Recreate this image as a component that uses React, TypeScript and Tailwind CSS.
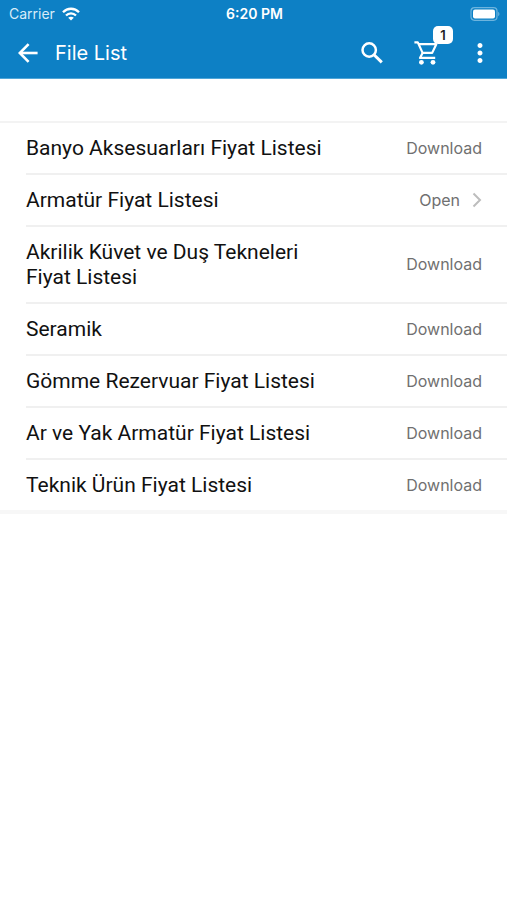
import { MdMoreVert } from 'react-icons/md';

type PriceFile = {
    name: string;
    downloaded?: boolean;
};

const files: PriceFile[] = [
    { name: 'Banyo Aksesuarları Fiyat Listesi' },
    { name: 'Armatür Fiyat Listesi', downloaded: true },
    { name: 'Akrilik Küvet ve Duş Tekneleri Fiyat Listesi' },
    { name: 'Seramik' },
    { name: 'Gömme Rezervuar Fiyat Listesi' },
    { name: 'Ar ve Yak Armatür Fiyat Listesi' },
    { name: 'Teknik Ürün Fiyat Listesi' },
];

export default function App() {
    return (
        <div className="min-h-screen bg-white font-['Inter','Liberation_Sans',sans-serif] text-[#111111]">
            <header className="border-b border-[#4fa6d8] bg-[#0d80c5] text-white">
                <StatusBar />
                <Toolbar />
            </header>

            <main className="pt-[42px]">
                <ul className="border-t-2 border-b-4 border-t-[#f3f3f3] border-b-[#f7f7f7]">
                    {files.map((file) => (
                        <FileRow key={file.name} file={file} />
                    ))}
                </ul>
            </main>
        </div>
    );
}

function StatusBar() {
    return (
        <div className="grid h-[27px] grid-cols-3 items-center pr-[7px] pl-[9px] text-[14px] leading-4">
            <div className="flex items-center gap-[7px]">
                <span className="text-[#d8ecf8]">Carrier</span>
                <WifiIcon />
            </div>
            <span className="text-center font-semibold">6:20 PM</span>
            <div className="flex justify-end">
                <BatteryIcon />
            </div>
        </div>
    );
}

function Toolbar() {
    return (
        <div className="flex h-[51px] items-center pr-[15px] pl-4">
            <button type="button" aria-label="Back" className="flex size-6 items-center justify-center">
                <BackIcon />
            </button>
            <h1 className="ml-[15px] flex-1 text-[20px] leading-6">File List</h1>
            <div className="flex items-center gap-[30px]">
                <button type="button" aria-label="Search" className="flex size-6 items-center justify-center">
                    <SearchIcon />
                </button>
                <button type="button" aria-label="Cart" className="relative size-6">
                    <CartIcon />
                    <span className="absolute -top-[15px] -right-[15px] flex h-[18px] w-5 items-center justify-center rounded-[5px] bg-white text-[13px] leading-4 font-semibold text-[#222222]">
                        1
                    </span>
                </button>
                <button type="button" aria-label="More options" className="flex size-6 items-center justify-center">
                    <MdMoreVert className="size-[30px] shrink-0" />
                </button>
            </div>
        </div>
    );
}

function FileRow({ file }: { file: PriceFile }) {
    return (
        <li className="group pl-[26px]">
            <div className="flex items-center justify-between border-b-2 border-[#f0f0f0] pt-[13px] pr-[25px] pb-3 group-last:border-b-0">
                <span className="max-w-[300px] font-['Roboto','Liberation_Sans',sans-serif] text-[21px] leading-[25px]">
                    {file.name}
                </span>
                <button type="button" className="flex items-center gap-3 pb-0.5 text-[16px] leading-5 text-[#707070]">
                    {file.downloaded ? 'Open' : 'Download'}
                    {file.downloaded && <ChevronIcon />}
                </button>
            </div>
        </li>
    );
}

function BackIcon() {
    return (
        <svg width="20" height="20" viewBox="0 0 20 20" fill="none" stroke="currentColor" strokeWidth="2.6" aria-hidden="true">
            <path d="M19.6 10H2.5" />
            <path d="M10.6 1.2L1.8 10L10.6 18.8" />
        </svg>
    );
}

function SearchIcon() {
    return (
        <svg width="22" height="22" viewBox="0 0 22 22" fill="none" stroke="currentColor" aria-hidden="true">
            <circle cx="8.2" cy="8" r="6.7" strokeWidth="2.5" />
            <path d="M13 12.8L20.8 20.4" strokeWidth="3" />
        </svg>
    );
}

function CartIcon() {
    return (
        <svg width="24" height="24" viewBox="0 0 24 24" fill="none" stroke="currentColor" strokeWidth="2.2" aria-hidden="true">
            <path d="M0.4 1.4H3.8L8.6 11.9H18.2L22.3 3.2H5" strokeLinejoin="round" />
            <path d="M8.6 11.9L6 16.9H21.2" strokeLinejoin="round" />
            <circle cx="7.4" cy="21.3" r="2.4" fill="currentColor" stroke="none" />
            <circle cx="19" cy="21.3" r="2.4" fill="currentColor" stroke="none" />
        </svg>
    );
}

function WifiIcon() {
    return (
        <svg width="18" height="14" viewBox="0 0 18 14" fill="none" stroke="currentColor" strokeWidth="2.3" aria-hidden="true">
            <path d="M1 5.2C5.4 0.6 12.6 0.6 17 5.2" />
            <path d="M4 8.5C6.8 5.6 11.2 5.6 14 8.5" />
            <path d="M9 13.6L6.2 10.7C7.8 9.3 10.2 9.3 11.8 10.7Z" fill="currentColor" stroke="none" />
        </svg>
    );
}

function BatteryIcon() {
    return (
        <svg width="30" height="14" viewBox="0 0 30 14" aria-hidden="true">
            <rect x="1" y="0.7" width="26" height="12.6" rx="3.5" fill="none" stroke="#6db4de" strokeWidth="1.2" />
            <rect x="3" y="2.4" width="22" height="9.2" rx="2" fill="white" />
            <path d="M28.2 4.8C29.9 5.6 29.9 8.4 28.2 9.2Z" fill="#6db4de" />
        </svg>
    );
}

function ChevronIcon() {
    return (
        <svg width="10" height="16" viewBox="0 0 10 16" fill="none" stroke="#bdbdbd" strokeWidth="2" aria-hidden="true">
            <path d="M1.5 1.5L8 8L1.5 14.5" />
        </svg>
    );
}
